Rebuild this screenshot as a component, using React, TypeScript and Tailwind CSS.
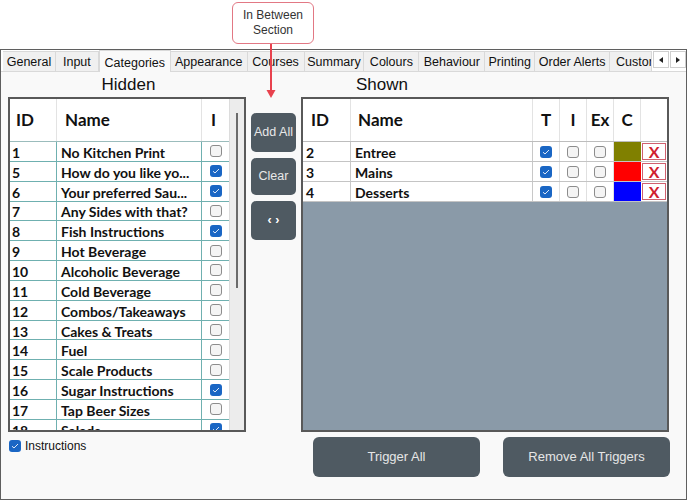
import React from 'react'

const hidden: [number, string, boolean][] = [
    [1, 'No Kitchen Print', false],
    [5, 'How do you like yo...', true],
    [6, 'Your preferred Sau...', true],
    [7, 'Any Sides with that?', false],
    [8, 'Fish Instructions', true],
    [9, 'Hot Beverage', false],
    [10, 'Alcoholic Beverage', false],
    [11, 'Cold Beverage', false],
    [12, 'Combos/Takeaways', false],
    [13, 'Cakes & Treats', false],
    [14, 'Fuel', false],
    [15, 'Scale Products', false],
    [16, 'Sugar Instructions', true],
    [17, 'Tap Beer Sizes', false],
    [18, 'Salads', true],
]

const shown: [number, string, string][] = [
    [2, 'Entree', 'bg-[#808000]'],
    [3, 'Mains', 'bg-[#ff0000]'],
    [4, 'Desserts', 'bg-[#0000ff]'],
]

const tabs: [string, string][] = [
    ['General', 'w-[53px]'],
    ['Input', 'w-[43px]'],
    ['Categories', 'w-[72px]'],
    ['Appearance', 'w-[77px]'],
    ['Courses', 'w-[57px]'],
    ['Summary', 'w-[60px]'],
    ['Colours', 'w-[55px]'],
    ['Behaviour', 'w-[66px]'],
    ['Printing', 'w-[50px]'],
    ['Order Alerts', 'w-[75px]'],
    ['Customer', 'w-[42px]'],
]

const Check = ({ on }: { on: boolean }) =>
    on ? (
        <div className="w-[12px] h-[12px] rounded-[3px] bg-[#1a66c4] flex items-center justify-center">
            <svg width="8" height="6" viewBox="0 0 8 6">
                <path d="M1 3.2 L3 5 L7 1" stroke="#dfe9f7" strokeWidth="1" fill="none" />
            </svg>
        </div>
    ) : (
        <div className="w-[12px] h-[12px] rounded-[3px] border border-[#8c8c8c] bg-[#f4f4f4]"></div>
    )

const ui = "font-['Liberation_Sans',Arial,sans-serif]"
const lato = "font-['Lato','Noto_Sans',sans-serif]"

const App = () => {
    return (
        <div className={`relative w-[688px] h-[502px] bg-white overflow-hidden ${ui}`}>
            {/* callout */}
            <div className="h-[49px] pt-[2px] pl-[232px]">
                <div className="w-[82px] h-[42px] border border-[#e27884] rounded-[6px] bg-white flex flex-col items-center justify-center text-[12px] leading-[15px] text-[#333]">
                    <span>In Between</span>
                    <span>Section</span>
                </div>
            </div>
            <svg className="absolute left-[266px] top-[44px]" width="10" height="56" viewBox="0 0 10 56">
                <line x1="5" y1="0" x2="5" y2="48" stroke="#e8424e" strokeWidth="2" />
                <path d="M0.5 46 L9.5 46 L5 54 Z" fill="#e8424e" />
            </svg>

            {/* window */}
            <div className="w-[687px] h-[451px] border border-[#5f5f5f] bg-[#f9f9f9] flex flex-col">
                <div className="h-[22px] flex items-end pl-[2px] bg-white border-b border-[#d9d9d9]">
                    {tabs.map(([t, w]) =>
                        t === 'Categories' ? (
                            <div key={t} className={`${w} h-[22px] bg-[#f9f9f9] border-x border-t border-[#d9d9d9] -mb-px flex justify-center pt-[3px] text-[12.5px] text-[#111] whitespace-nowrap`}>
                                {t}
                            </div>
                        ) : (
                            <div key={t} className={`${w} h-[20px] pt-[2px] bg-[#f0f0f0] border-r border-t border-[#d9d9d9] flex items-center text-[12.5px] text-[#111] whitespace-nowrap overflow-hidden ${t === 'Customer' ? 'justify-start pl-[6px]' : 'justify-center'}`}>
                                {t}
                            </div>
                        )
                    )}
                    <div className="h-[20px] ml-[1px] flex gap-[1px] self-end">
                        <div className="w-[16px] h-[17px] border border-[#cfcfcf] bg-white flex items-center justify-center">
                            <svg width="4" height="6" viewBox="0 0 4 6"><path d="M4 0 L0 3 L4 6 Z" fill="#222" /></svg>
                        </div>
                        <div className="w-[16px] h-[17px] border border-[#cfcfcf] bg-white flex items-center justify-center">
                            <svg width="4" height="6" viewBox="0 0 4 6"><path d="M0 0 L4 3 L0 6 Z" fill="#222" /></svg>
                        </div>
                    </div>
                </div>

                <div className="pl-[7px] flex flex-col">
                    {/* headings */}
                    <div className="h-[25px] flex items-center text-[17px] text-[#111]">
                        <div className="w-[238px] text-center pl-[3px]">Hidden</div>
                        <div className="pl-[110px]">Shown</div>
                    </div>

                    <div className="flex gap-[5px] h-[335px]">
                        {/* hidden table */}
                        <div className={`w-[238px] h-[335px] border-2 border-[#595959] flex overflow-hidden ${lato}`}>
                            <div className="w-[220px] flex flex-col bg-white">
                                <div className="h-[43px] shrink-0 flex border-b border-[#9bbcbc] text-[17px] font-bold text-[#111]">
                                    <div className="w-[47px] border-r border-[#e3e3e3] flex items-center pl-[6px]">ID</div>
                                    <div className="w-[145px] border-r border-[#e3e3e3] flex items-center pl-[8px]">Name</div>
                                    <div className="w-[27px] flex items-center pl-[9px]">I</div>
                                </div>
                                {hidden.map(([id, name, on]) => (
                                    <div key={id} className="h-[19.85px] shrink-0 flex border-b border-[#6fb0b0] text-[14px] font-bold text-[#111] leading-none">
                                        <div className="w-[47px] border-r border-[#6fb0b0] flex items-center pl-[2px] pt-[3px]">{id}</div>
                                        <div className="w-[145px] border-r border-[#6fb0b0] flex items-center pl-[4px] pt-[3px] whitespace-nowrap">{name}</div>
                                        <div className="w-[27px] flex items-center justify-center">
                                            <Check on={on} />
                                        </div>
                                    </div>
                                ))}
                            </div>
                            <div className="w-[16px] bg-[#ececec] border-l border-[#dcdcdc] pt-[14px] pl-[6px]">
                                <div className="w-[2px] h-[175px] bg-[#6b6b6b]"></div>
                            </div>
                        </div>

                        {/* middle buttons */}
                        <div className="w-[45px] pt-[16px] flex flex-col gap-[6px] text-[12.5px] text-[#e8e8e8]">
                            <div className="h-[39px] rounded-[5px] bg-[#4f5a62] flex items-center justify-center">Add All</div>
                            <div className="h-[37px] rounded-[5px] bg-[#4f5a62] flex items-center justify-center">Clear</div>
                            <div className="h-[39px] rounded-[5px] bg-[#4f5a62] flex items-center justify-center font-bold text-white">‹ ›</div>
                        </div>

                        {/* shown table */}
                        <div className={`w-[368px] h-[335px] border-2 border-[#595959] flex flex-col overflow-hidden ${lato}`}>
                            <div className="h-[43px] shrink-0 flex bg-white border-b border-[#bdbdbd] text-[17px] font-bold text-[#111]">
                                <div className="w-[48px] border-r border-[#e3e3e3] flex items-center pl-[8px]">ID</div>
                                <div className="w-[182px] border-r border-[#e3e3e3] flex items-center pl-[7px]">Name</div>
                                <div className="w-[27px] border-r border-[#e3e3e3] flex items-center justify-center">T</div>
                                <div className="w-[27px] border-r border-[#e3e3e3] flex items-center justify-center">I</div>
                                <div className="w-[27px] border-r border-[#e3e3e3] flex items-center justify-center">Ex</div>
                                <div className="w-[27px] border-r border-[#e3e3e3] flex items-center justify-center">C</div>
                                <div className="w-[26px]"></div>
                            </div>
                            {shown.map(([id, name, col]) => (
                                <div key={id} className="h-[20px] shrink-0 flex bg-white border-b border-[#c4c4c4] text-[14px] font-bold text-[#111] leading-none">
                                    <div className="w-[48px] border-r border-[#c8c8c8] flex items-center pl-[3px] pt-[2px]">{id}</div>
                                    <div className="w-[182px] border-r border-[#c8c8c8] flex items-center pl-[4px] pt-[2px]">{name}</div>
                                    <div className="w-[27px] border-r border-[#e0e0e0] flex items-center justify-center"><Check on={true} /></div>
                                    <div className="w-[27px] border-r border-[#e0e0e0] flex items-center justify-center"><Check on={false} /></div>
                                    <div className="w-[27px] border-r border-[#e0e0e0] flex items-center justify-center"><Check on={false} /></div>
                                    <div className={`w-[27px] ${col}`}></div>
                                    <div className="w-[26px] p-[1px]">
                                        <div className="w-full h-full border border-[#d0606e] flex items-center justify-center text-[#d0202e] text-[16px] font-bold">X</div>
                                    </div>
                                </div>
                            ))}
                            <div className="flex-1 bg-[#8a9aa8]"></div>
                        </div>
                    </div>

                    {/* bottom */}
                    <div className="flex pt-[5px]">
                        <div className="w-[293px] flex items-center gap-[4px] h-[18px] pl-[1px]">
                            <Check on={true} />
                            <span className="text-[12px] text-[#111]">Instructions</span>
                        </div>
                        <div className="pl-[12px] flex gap-[23px] text-[13px] text-[#e6e6e6]">
                            <div className="w-[167px] h-[40px] rounded-[6px] bg-[#4f5a62] flex items-center justify-center">Trigger All</div>
                            <div className="w-[167px] h-[40px] rounded-[6px] bg-[#4f5a62] flex items-center justify-center">Remove All Triggers</div>
                        </div>
                    </div>
                </div>
            </div>
        </div>
    )
}

export default App
